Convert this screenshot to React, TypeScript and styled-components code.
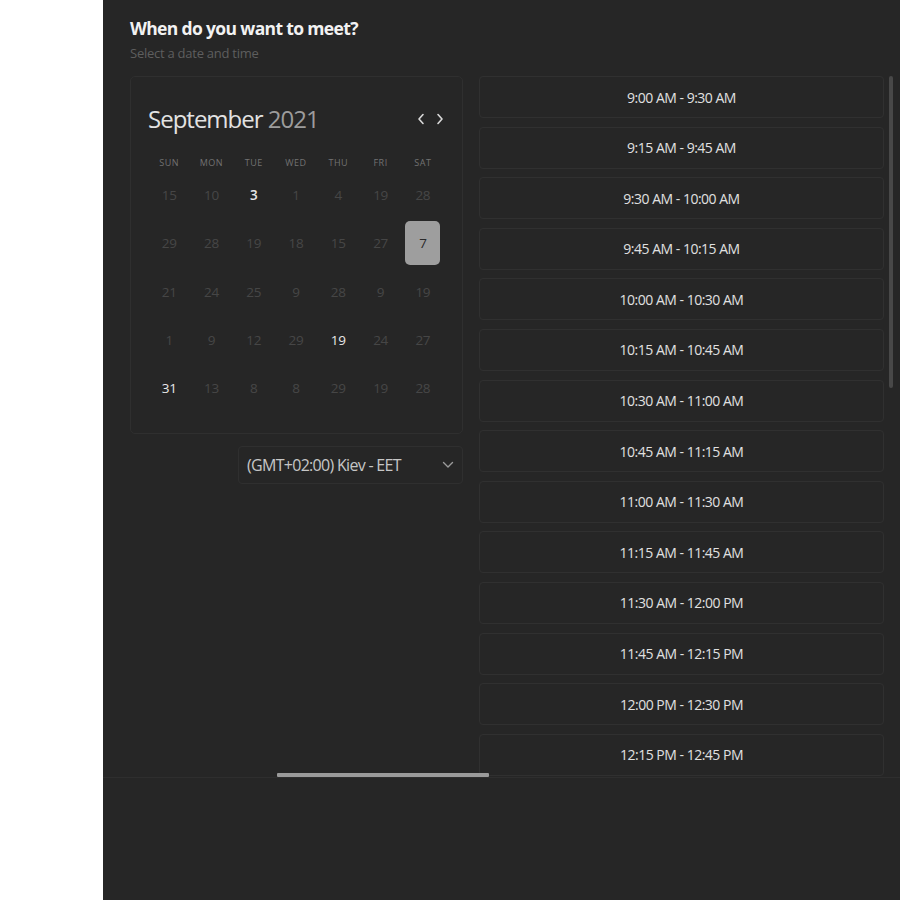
import React from 'react'
import styled, { createGlobalStyle } from 'styled-components'

const GlobalStyle = createGlobalStyle`
    body {
        margin: 0;
        background: #ffffff;
        font-family: 'Open Sans', 'Noto Sans', sans-serif;
    }
`

interface Day {
    value: number
    bright?: boolean
    bold?: boolean
    selected?: boolean
}

const WEEKDAYS = ['SUN', 'MON', 'TUE', 'WED', 'THU', 'FRI', 'SAT']

const d = (value: number, extra: Partial<Day> = {}): Day => ({ value, ...extra })

const WEEKS: Day[][] = [
    [d(15), d(10), d(3, { bright: true, bold: true }), d(1), d(4), d(19), d(28)],
    [d(29), d(28), d(19), d(18), d(15), d(27), d(7, { selected: true })],
    [d(21), d(24), d(25), d(9), d(28), d(9), d(19)],
    [d(1), d(9), d(12), d(29), d(19, { bright: true }), d(24), d(27)],
    [d(31, { bright: true }), d(13), d(8), d(8), d(29), d(19), d(28)],
]

const fmt = (mins: number) => {
    const h24 = Math.floor(mins / 60)
    const m = mins % 60
    const suffix = h24 >= 12 ? 'PM' : 'AM'
    const h = h24 > 12 ? h24 - 12 : h24
    return `${h}:${m.toString().padStart(2, '0')} ${suffix}`
}

// 9:00 AM onwards, 15 minute steps, 30 minute meetings
const SLOTS: string[] = Array.from({ length: 14 }, (_, i) => {
    const start = 9 * 60 + i * 15
    return `${fmt(start)} - ${fmt(start + 30)}`
})

const ChevronLeft = () => (
    <svg width='8' height='12' viewBox='0 0 8 12'>
        <polyline points='6,1.5 2,6 6,10.5' fill='none' stroke='#d8d8d8' strokeWidth='1.6' strokeLinecap='round' strokeLinejoin='round' />
    </svg>
)

const ChevronRight = () => (
    <svg width='8' height='12' viewBox='0 0 8 12'>
        <polyline points='2,1.5 6,6 2,10.5' fill='none' stroke='#d8d8d8' strokeWidth='1.6' strokeLinecap='round' strokeLinejoin='round' />
    </svg>
)

const ChevronDown = () => (
    <svg width='12' height='8' viewBox='0 0 12 8'>
        <polyline points='1.5,1.5 6,6 10.5,1.5' fill='none' stroke='#9a9a9a' strokeWidth='1.4' strokeLinecap='round' strokeLinejoin='round' />
    </svg>
)

const App: React.FC = () => {
    return (
        <Page>
            <GlobalStyle />
            <Side />
            <Panel>
                <Header>
                    <Title>When do you want to meet?</Title>
                    <Subtitle>Select a date and time</Subtitle>
                </Header>
                <Body>
                    <LeftCol>
                        <CalendarCard>
                            <MonthRow>
                                <MonthLabel>
                                    September <Year>2021</Year>
                                </MonthLabel>
                                <NavButtons>
                                    <NavButton><ChevronLeft /></NavButton>
                                    <NavButton><ChevronRight /></NavButton>
                                </NavButtons>
                            </MonthRow>
                            <Grid>
                                {WEEKDAYS.map((w) => (
                                    <WeekdayCell key={w}>{w}</WeekdayCell>
                                ))}
                                {WEEKS.flat().map((day, i) => (
                                    <DayCell key={i}>
                                        <DayNumber $bright={day.bright} $bold={day.bold} $selected={day.selected}>
                                            {day.value}
                                        </DayNumber>
                                    </DayCell>
                                ))}
                            </Grid>
                        </CalendarCard>
                        <TimezoneSelect>
                            <span>(GMT+02:00) Kiev - EET</span>
                            <ChevronDown />
                        </TimezoneSelect>
                    </LeftCol>
                    <SlotList>
                        {SLOTS.map((s) => (
                            <Slot key={s}>{s}</Slot>
                        ))}
                    </SlotList>
                    <VScroll>
                        <VThumb />
                    </VScroll>
                    <HThumb />
                </Body>
                <Footer />
            </Panel>
        </Page>
    )
}

const Page = styled.div`
    display: flex;
    width: 900px;
    height: 900px;
    overflow: hidden;
`

const Side = styled.div`
    width: 103px;
    flex-shrink: 0;
    background: #ffffff;
`

const Panel = styled.div`
    flex: 1;
    display: flex;
    flex-direction: column;
    background: #262626;
`

const Header = styled.div`
    padding: 17px 0 0 27px;
`

const Title = styled.h1`
    margin: 0;
    font-size: 17.5px;
    line-height: 22px;
    font-weight: 700;
    letter-spacing: -0.65px;
    color: #f2f2f2;
`

const Subtitle = styled.p`
    margin: 5px 0 0;
    font-size: 13px;
    line-height: 18px;
    letter-spacing: -0.25px;
    color: #5e5e5e;
`

const Body = styled.div`
    position: relative;
    display: flex;
    gap: 16px;
    margin-top: 14px;
    padding-left: 27px;
    height: 701px;
    overflow: hidden;
`

const LeftCol = styled.div`
    width: 333px;
    flex-shrink: 0;
    display: flex;
    flex-direction: column;
`

const CalendarCard = styled.div`
    border: 1px solid #2f2f2f;
    border-radius: 5px;
    padding: 26px 18px 21px 17px;
`

const MonthRow = styled.div`
    display: flex;
    align-items: center;
    justify-content: space-between;
    height: 32px;
`

const MonthLabel = styled.div`
    font-size: 24px;
    line-height: 32px;
    letter-spacing: -1px;
    color: #e2e2e2;
`

const Year = styled.span`
    color: #9c9c9c;
`

const NavButtons = styled.div`
    display: flex;
    gap: 11px;
`

const NavButton = styled.div`
    display: flex;
    align-items: center;
    justify-content: center;
    width: 8px;
    height: 12px;
`

const Grid = styled.div`
    display: grid;
    grid-template-columns: repeat(7, 1fr);
    grid-auto-rows: 48.3px;
    grid-template-rows: 18px;
    margin-top: 18px;
    width: 296px;
`

const WeekdayCell = styled.div`
    display: flex;
    align-items: center;
    justify-content: center;
    font-size: 9px;
    letter-spacing: 0.5px;
    color: #727272;
`

const DayCell = styled.div`
    display: flex;
    align-items: center;
    justify-content: center;
`

const DayNumber = styled.div<{ $bright?: boolean; $bold?: boolean; $selected?: boolean }>`
    display: flex;
    align-items: center;
    justify-content: center;
    width: 35px;
    height: 44px;
    border-radius: 5px;
    font-size: 13.5px;
    letter-spacing: -0.3px;
    font-weight: ${(p) => (p.$bold ? 600 : 400)};
    color: ${(p) => (p.$selected ? '#2a2a2a' : p.$bright ? '#e8e8e8' : '#464646')};
    background: ${(p) => (p.$selected ? '#9e9e9e' : 'transparent')};
`

const TimezoneSelect = styled.div`
    align-self: flex-end;
    margin-top: 12px;
    width: 225px;
    height: 38px;
    box-sizing: border-box;
    border: 1px solid #2f2f2f;
    border-radius: 4px;
    padding: 0 8px 0 8px;
    display: flex;
    align-items: center;
    justify-content: space-between;
    font-size: 16px;
    letter-spacing: -0.7px;
    color: #c6c6c6;
`

const SlotList = styled.div`
    width: 405px;
    flex-shrink: 0;
    display: flex;
    flex-direction: column;
    gap: 8.6px;
`

const Slot = styled.div`
    flex-shrink: 0;
    height: 42px;
    box-sizing: border-box;
    border: 1px solid #303030;
    border-radius: 4px;
    display: flex;
    align-items: center;
    justify-content: center;
    font-size: 14px;
    letter-spacing: -0.5px;
    color: #e0e0e0;
`

const VScroll = styled.div`
    margin-left: -11px;
    width: 4px;
    flex-shrink: 0;
`

const VThumb = styled.div`
    width: 4px;
    height: 312px;
    border-radius: 2px;
    background: #484848;
`

const HThumb = styled.div`
    position: absolute;
    left: 174px;
    bottom: 0;
    width: 212px;
    height: 4px;
    border-radius: 1px;
    background: #9a9a9a;
`

const Footer = styled.div`
    flex: 1;
    border-top: 1px solid #2e2e2e;
`

export default App
